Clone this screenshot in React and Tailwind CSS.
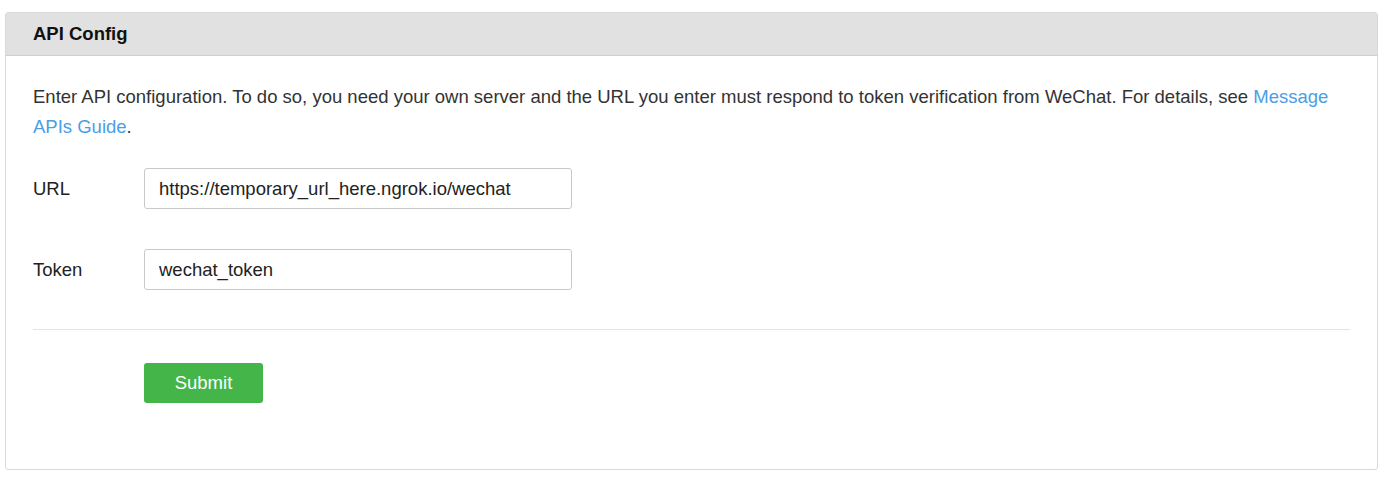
const App = () => {
  return (
    <div className="min-h-screen bg-white pt-[12px] pl-[5px] pr-[6px] font-['Liberation_Sans',Arial,sans-serif]">
      <div className="border border-[#d9d9d9] rounded-[3px] bg-white">
        {/* Header */}
        <div className="h-[43px] bg-[#e1e1e1] border-b border-[#cfcfcf] flex items-center pl-[27px]">
          <h2 className="text-[18.5px] font-bold text-[#111]">API Config</h2>
        </div>

        {/* Body */}
        <div className="px-[27px] pt-[26px] pb-[66px]">
          <p className="text-[18.5px] leading-[30px] text-[#333]">
            Enter API configuration. To do so, you need your own server and the URL you enter must respond to token verification from WeChat. For details, see{" "}
            <a href="#" className="text-[#4a9ee8]">Message APIs Guide</a>.
          </p>

          <div className="mt-[26px] flex flex-col gap-[40px]">
            <div className="flex items-center">
              <label className="w-[111px] text-[18.5px] text-[#222]">URL</label>
              <input
                type="text"
                defaultValue="https://temporary_url_here.ngrok.io/wechat"
                className="w-[428px] h-[41px] border border-[#c9c9c9] rounded-[3px] px-[14px] text-[18.5px] text-[#222] outline-none"
              />
            </div>
            <div className="flex items-center">
              <label className="w-[111px] text-[18.5px] text-[#222]">Token</label>
              <input
                type="text"
                defaultValue="wechat_token"
                className="w-[428px] h-[41px] border border-[#c9c9c9] rounded-[3px] px-[14px] text-[18.5px] text-[#222] outline-none"
              />
            </div>
          </div>

          <div className="mt-[39px] border-t border-[#e4e4e4]" />

          <div className="pl-[111px] pt-[33px]">
            <button className="w-[119px] h-[40px] bg-[#44b549] rounded-[3px] text-white text-[18.5px]">
              Submit
            </button>
          </div>
        </div>
      </div>
    </div>
  );
};

export default App;
